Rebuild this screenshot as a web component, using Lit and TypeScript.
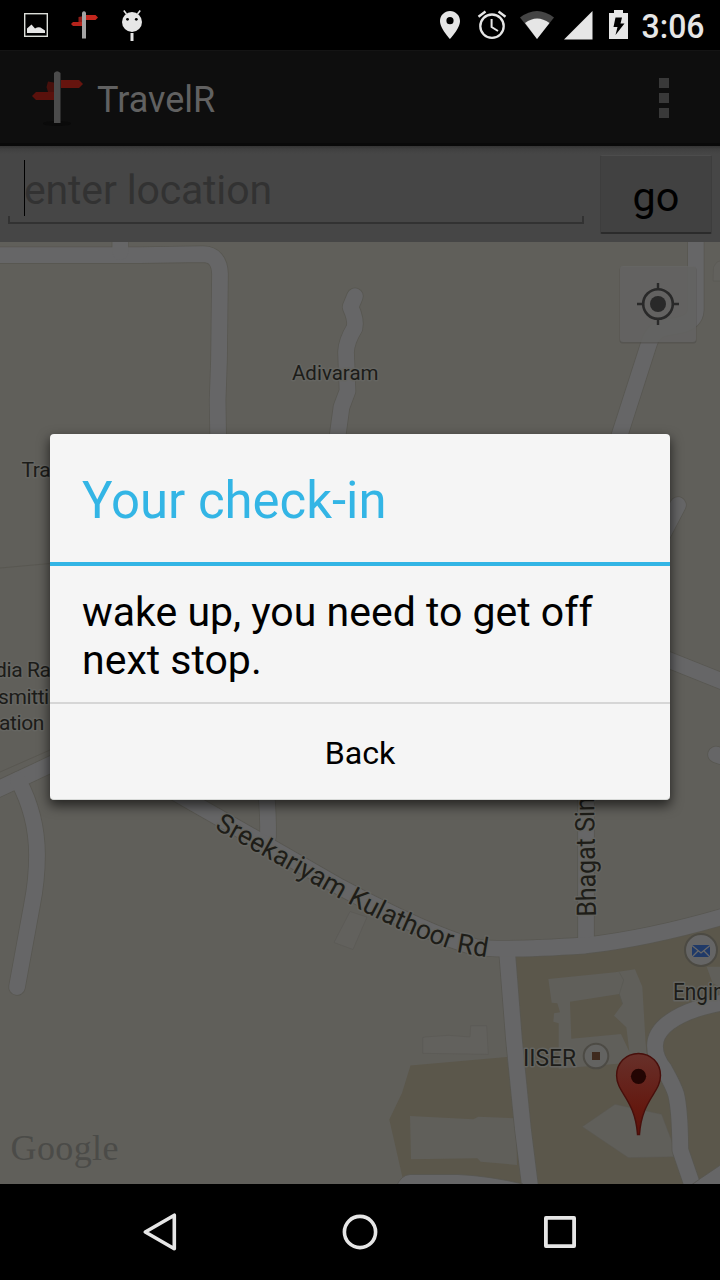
import { LitElement, html, css, svg } from "lit";
import { customElement } from "lit/decorators.js";

const ROADS = [
  "M-5 255.2H140L203 254.2Q219.5 254.5 220 274L219 360L217.6 400L218.2 440",
  "M120.3 236V252",
  "M355 296.2L350.5 307Q356.5 320 354.5 328Q346.5 341 346 352L347.5 391L341.5 407L337 440",
  "M695.8 236V310Q695 322 680 325L664 328Q653 330 648.5 345L618 440",
  "M678 505L655 549",
  "M660 656.5L725 682.5",
  "M716 754.5L732 760",
  "M-6 791L56 762",
  "M18 780Q37 815 37 855Q37 880 32 905L17 987",
  "M266 790Q268.5 815 268 837",
  "M586 790V942",
  "M507 951L514 1040L523 1130L531 1194",
  "M725 1002Q700 1007 688 1012Q655 1026 655 1046Q655 1058 664 1069Q674 1087 676 1094Q680 1110 680.3 1150L694 1190",
  "M140 772L188 800L260 841L340 887Q430 935 475 947Q500 951 585 945.5Q650 938 725 916",
];

@customElement("status-bar")
class StatusBar extends LitElement {
  static styles = css`
    :host { display: block; height: 50px; background: #000; }
    .bar { display: flex; height: 50px; align-items: center; justify-content: space-between; }
    .time { font: 500 33px/50px Roboto, sans-serif; fill: #e6e6e6; }
    svg { display: block; }
  `;
  render() {
    return html`<div class="bar">
      <svg width="180" height="50" viewBox="0 0 180 50">
        <rect x="24.7" y="13.7" width="22.6" height="22.6" fill="none" stroke="#dcded9" stroke-width="1.4" />
        <path d="M27 33V28.5L31.5 24.5L35 28.5Q38 26.5 40.5 27.5L45 30.5V33Z" fill="#e6e6e6" />
        <path d="M71 24L73 22H82V26H73Z" fill="#b5231b" />
        <path d="M78.5 17L84 16V22H78.5Z" fill="#8e1c17" />
        <path d="M86 15H95.5L98 17.5L95.5 20H86Z" fill="#c3261d" />
        <path d="M82 38.5V12.5Q84 10 86 12.5V38.5Z" fill="#a3a3a3" />
        <path d="M123.8 10.5L126.5 14M140.2 10.5L137.5 14" stroke="#e6e6e6" stroke-width="1.6" />
        <circle cx="132" cy="22" r="10" fill="#e6e6e6" />
        <circle cx="127.5" cy="19.3" r="1.4" /><circle cx="136.3" cy="19.3" r="1.4" />
        <path d="M132 33V41" stroke="#e6e6e6" stroke-width="3" />
      </svg>
      <svg width="290" height="50" viewBox="430 0 290 50">
        <path fill="#e6e6e6" fill-rule="evenodd" d="M450 11C444.500 11 440 15.400 440 21C440 28.500 450 39 450 39S460 28.500 460 21C460 15.400 455.500 11 450 11ZM450 24.300A3.600 3.600 0 1 1 450 17.100A3.600 3.600 0 0 1 450 24.300Z" />
        <g fill="none" stroke="#e6e6e6">
          <circle cx="492" cy="26.200" r="11.700" stroke-width="2.300" />
          <path d="M491.600 19V27L498 31" stroke-width="2" />
          <path d="M478.500 16.800L485.500 11.500M505.500 16.800L498.500 11.500" stroke-width="2.400" />
        </g>
        <path d="M520 17.500Q537 4.500 554 17.500L537 39Z" fill="#444" />
        <path d="M525 23Q537 14 549.500 23L537 39Z" fill="#e6e6e6" />
        <path d="M564 39.500L592.500 11V39.500Z" fill="#e6e6e6" />
        <path d="M609 13H614V10H623V13H628V39H609Z" fill="#e6e6e6" />
        <path d="M615.500 17.500H622L620.500 23.500H624.500L615.500 35L617.500 27H613.500Z" fill="#000" />
        <text class="time" x="641.500" y="37.500" textLength="63" lengthAdjust="spacingAndGlyphs">3:06</text>
      </svg>
    </div>`;
  }
}

@customElement("action-bar")
class ActionBar extends LitElement {
  static styles = css`
    :host { display: block; }
    .bar {
      box-sizing: border-box; height: 96px; padding: 0 51px 0 32px; display: flex; align-items: center;
      background: #0e0e0e; border-top: 1px solid #141414; border-bottom: 3px solid #090909;
    }
    .title { flex: 1; margin-left: 14px; font: 36px/42px Roboto, sans-serif; color: #616161; padding-top: 6px; }
    .more { display: grid; gap: 5px; padding-top: 2px; }
    .dot { width: 10px; height: 10px; background: #393939; }
  `;
  render() {
    return html`<div class="bar">
      <svg width="51" height="60" viewBox="32 67 51 60">
        <ellipse cx="57" cy="123.500" rx="14" ry="2.500" fill="#0a0a0a" />
        <path d="M32 96L36 92H54V100H36Z" fill="#5a110c" />
        <path d="M61 80H79L83 84L79 88H61Z" fill="#66140e" />
        <path d="M48 81.500L54 82.500H57V92H48L46.500 87Z" fill="#48100c" />
        <path d="M54 123V73Q57 69.500 60.500 73V123Z" fill="#4b4b4b" />
      </svg>
      <span class="title">TravelR</span>
      <div class="more"><i class="dot"></i><i class="dot"></i><i class="dot"></i></div>
    </div>`;
  }
}

@customElement("search-row")
class SearchRow extends LitElement {
  static styles = css`
    :host { display: block; }
    .row {
      box-sizing: border-box; height: 96px; padding: 9px 8px 7px; display: flex; gap: 16px;
      background: linear-gradient(#333 0, #404040 3px, #464646 8px);
      font: 41.4px/48px Roboto, sans-serif;
    }
    .field { flex: 1; display: flex; flex-direction: column; align-items: stretch; }
    .input { display: flex; margin: 5px 0 0 16px; height: 56px; border-left: 1px solid #000; color: #323232; }
    .hint { padding-top: 6px; font-size: 41px; letter-spacing: -.16px; margin-left: -1px; }
    .line { height: 6px; border: 2px solid #323232; border-top: 0; }
    .go {
      box-sizing: border-box; width: 112px; height: 79px; background: #414141; color: #000;
      border: 1px solid #3d3d3d; border-top-color: #4c4c4c; border-bottom: 2px solid #2b2b2b; border-radius: 2px;
      display: flex; justify-content: center; padding-top: 17px;
    }
  `;
  render() {
    return html`<div class="row">
      <div class="field">
        <div class="input"><span class="hint">enter location</span></div>
        <div class="line"></div>
      </div>
      <div class="go">go</div>
    </div>`;
  }
}

@customElement("map-view")
class MapView extends LitElement {
  static styles = css`
    :host { display: block; height: 942px; }
    svg { display: block; }
    text { font-family: Roboto, sans-serif; fill: #1c1c19; stroke: #656561; stroke-width: 3px; paint-order: stroke; stroke-linejoin: round; }
    .place { font-size: 21px; }
    .tight { letter-spacing: -.4px; }
    .poi { font-size: 23px; }
    .street { font-size: 27px; fill: #1e1d18; }
    .google { font-family: "Liberation Serif", serif; font-size: 36px; fill: #4b4b48; stroke: none; }
    .edge { fill: none; stroke: #585751; stroke-width: 17.4px; stroke-linecap: round; stroke-linejoin: round; }
    .road { fill: none; stroke: #666667; stroke-width: 15.8px; stroke-linecap: round; stroke-linejoin: round; }
  `;
  render() {
    return html`<svg width="720" height="942" viewBox="0 242 720 942">
      <defs>
        <linearGradient id="pin" x1="0" y1="0" x2="0" y2="1">
          <stop offset="0" stop-color="#67302a" /><stop offset=".7" stop-color="#64180f" /><stop offset="1" stop-color="#5c120b" />
        </linearGradient>
        <path id="kulathoor" d="M214 828.500L344 901Q409 937 462 953L520 963" />
      </defs>
      <rect y="242" width="720" height="942" fill="#605f5a" />
      <path d="M0 568L50 563.500M0 772L50 750" stroke="#57564f" stroke-width=".8" fill="none" />
      <path d="M506 953L590 950L720 918V1184H525Z" fill="#5b574b" />
      <path d="M410.500 1065.500L507 1057L525 1184H404L389.300 1119.500L402 1093Z" fill="#5b574b" />
      <path d="M720 261L717 262L713.500 267L713 281H720M350 911.500L367 917L353 949.500L334 942.500Z" fill="#62615d" stroke="#5a5954" stroke-width=".7" />
      <g transform="translate(360 780) scale(.33333)" fill="#605f5a">
        <path d="M150 1008L340 1018L355 1010L468 1015L471 1155L362 1145L352 1135L153 1138Z" />
        <path d="M188 773L195 771L265 766L330 771L332 737H380L385 823L188 820Z" fill="#62615d" stroke="#5a5954" stroke-width="2" />
        <path d="M565 597L765 577L825 568L847 620L857 790L862 840L790 850L596 866V730L580 725L582 700L600 697L592 670L575 668ZM630 665L634 776L783 762L808 815L799 742L762 707L788 672L778 642Z" fill-rule="evenodd" />
        <path d="M778 577L791 600L778 642L788 672" fill="none" stroke="#585752" stroke-width="2" />
        <path d="M667 1040L765 973L905 1003L953 1130L805 1133Z" stroke="#595750" stroke-width="1.500" />
        <path d="M1040 560L1058 610L1080 620V560Z" />
      </g>
      ${ROADS.map((d) => svg`<path class="edge" d=${d} />`)}
      ${ROADS.map((d) => svg`<path class="road" d=${d} />`)}
      <path d="M396 1187Q401 1175 410 1174.500H458Q490 1176 523 1184V1187ZM690 1186L700.500 1178.500L722 1164V1186Z" fill="#666667" stroke="#57564f" stroke-width=".8" />
      <text class="place" x="292" y="379.800" textLength="86.500" lengthAdjust="spacingAndGlyphs">Adivaram</text>
      <text class="place tight" x="21.500" y="477">Tra</text>
      <text class="place tight" x="-5" y="677">dia Rad</text>
      <text class="place tight" x="-2" y="704">smittin</text>
      <text class="place tight" x="-1" y="730.300">ation</text>
      <text class="street"><textPath href="#kulathoor" textLength="303" lengthAdjust="spacingAndGlyphs">Sreekariyam Kulathoor Rd</textPath></text>
      <text class="street" transform="translate(596 916.500) rotate(-91)" textLength="147" lengthAdjust="spacingAndGlyphs">Bhagat Singh</text>
      <text class="poi" x="523" y="1065.500" textLength="53" lengthAdjust="spacingAndGlyphs">IISER</text>
      <text class="poi" x="673" y="999.500" textLength="51.500" lengthAdjust="spacingAndGlyphs">Engin</text>
      <circle cx="596" cy="1056" r="12.300" fill="#636361" stroke="#4d4b45" stroke-width="2" />
      <rect x="592" y="1052" width="8" height="8" fill="#3f2a1e" />
      <circle cx="701" cy="950" r="16" fill="#656565" stroke="#4c4a43" stroke-width="2" />
      <rect x="692" y="945" width="18" height="12" fill="#203a68" />
      <path d="M692 945.500L701 953L710 945.500M692 957L698 951M710 957L704 951" fill="none" stroke="#686868" stroke-width="1.300" />
      <path d="M638.500 1053.500C626 1053.500 616.600 1063 616.600 1075.500C616.600 1093 635 1099 637.500 1134.500H639.500C642 1099 660.500 1093 660.500 1075.500C660.500 1063 651 1053.500 638.500 1053.500Z" fill="url(#pin)" stroke="#480f0b" stroke-width="1.400" />
      <circle cx="638.500" cy="1076.300" r="7.600" fill="#230503" />
      <rect x="619.500" y="267" width="77" height="76.500" rx="3" fill="#504f4b" opacity=".6" />
      <rect x="620" y="266" width="76" height="76" rx="3" fill="#666665" fill-opacity=".78" />
      <g fill="none" stroke="#292929">
        <circle cx="658" cy="304" r="14.800" stroke-width="2.600" />
        <path d="M658 283V290M658 318V325M637 304H644M672 304H679" stroke-width="2.400" />
      </g>
      <circle cx="658" cy="304" r="8" fill="#292929" />
      <text class="google" x="10.500" y="1159.500" textLength="108">Google</text>
    </svg>`;
  }
}

@customElement("checkin-dialog")
class CheckinDialog extends LitElement {
  static styles = css`
    :host { display: block; }
    .dialog {
      box-sizing: border-box; width: 620px; height: 366px; background: #f5f5f5; border-radius: 4px; overflow: hidden;
      border-bottom: 1px solid #d8dad8; box-shadow: 0 5px 12px 1px rgba(0, 0, 0, .6);
      font-family: Roboto, sans-serif; color: #000; display: flex; flex-direction: column;
    }
    .title { box-sizing: border-box; height: 132px; padding: 37px 32px 0; border-bottom: 4px solid #33b5e5; font-size: 50.9px; line-height: 60px; color: #33b5e5; }
    .message { box-sizing: border-box; height: 138px; padding: 22px 32px 0; border-bottom: 2px solid #d6d6d6; font-size: 41px; line-height: 48px; }
    .back { flex: 1; display: flex; align-items: center; justify-content: center; font-size: 32.2px; line-height: 38px; padding-top: 3px; }
  `;
  render() {
    return html`<div class="dialog">
      <div class="title">Your check-in</div>
      <div class="message">wake up, you need to get off next stop.</div>
      <div class="back">Back</div>
    </div>`;
  }
}

@customElement("nav-bar")
class NavBar extends LitElement {
  static styles = css`
    :host { display: block; }
    .nav { height: 96px; background: #000; display: flex; justify-content: center; gap: 160px; align-items: center; }
  `;
  render() {
    return html`<div class="nav">
      <svg width="40" height="40" fill="none" stroke="#e6e6e6" stroke-width="3.600" stroke-linejoin="round"><path d="M5.300 20L34.300 3.200V36.800Z" /></svg>
      <svg width="40" height="40" fill="none" stroke="#e6e6e6" stroke-width="3.600"><circle cx="20" cy="20" r="15.600" /></svg>
      <svg width="40" height="40" fill="none" stroke="#e6e6e6" stroke-width="3.800" stroke-linejoin="round"><rect x="5.900" y="5.900" width="28.200" height="28.200" /></svg>
    </div>`;
  }
}

@customElement("app-root")
class AppRoot extends LitElement {
  static styles = css`
    :host { display: block; width: 720px; height: 1280px; position: relative; overflow: hidden; background: #000; }
    .overlay { position: absolute; inset: 0; display: flex; justify-content: center; align-items: flex-start; padding-top: 434px; }
  `;
  render() {
    return html`
      <status-bar></status-bar>
      <action-bar></action-bar>
      <search-row></search-row>
      <map-view></map-view>
      <nav-bar></nav-bar>
      <div class="overlay"><checkin-dialog></checkin-dialog></div>
    `;
  }
}
